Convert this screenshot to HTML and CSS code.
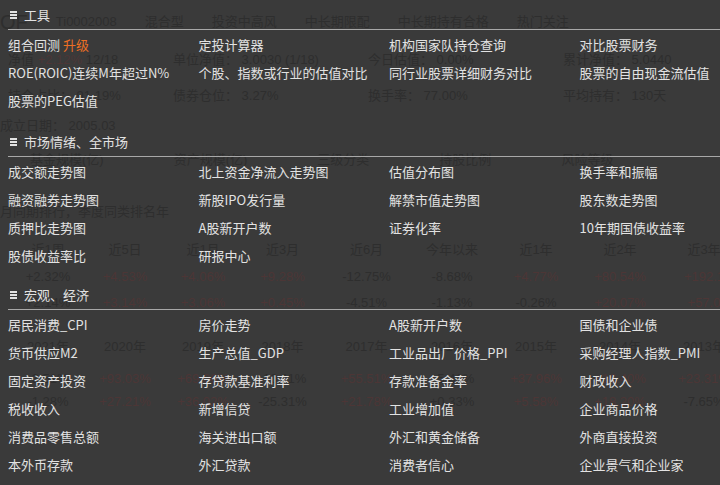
FILE: index.html
```html
<!DOCTYPE html>
<html lang="zh-CN">
<head>
<meta charset="utf-8">
<title>工具菜单</title>
<link rel="stylesheet" href="styles.css">
</head>
<body>
<div class="ghost">
  <div class="g-row g-a">
    <span class="g-big">OF</span><span>Ti0002008</span><span>混合型</span><span>投资中高风</span><span>中长期限配</span><span>中长期持有合格</span><span>热门关注</span>
  </div>
  <div class="g-row g-b g-four">
    <span>净值 <em class="red">+2.12%</em> 12/18</span><span>单位净值： 3.0030 (1/18)</span><span>今日估值： 0.00%</span><span>累计净值： 5.0440</span>
  </div>
  <div class="g-row g-c g-four">
    <span>持仓占比： 91.19%</span><span>债券仓位： 3.27%</span><span>换手率： 77.00%</span><span>平均持有： 130天</span>
  </div>
  <div class="g-row g-d"><span>成立日期： 2005.03</span></div>
  <div class="g-row g-e">
    <span>基金规模(亿)</span><span>资产规模(亿)</span><span>三级分类</span><span>持股比例</span><span>风险等级</span>
  </div>
  <div class="g-row g-f"><span>月同期排行，季度同类排名年</span></div>
  <div class="g-row g-g g-nine">
    <span>近1周</span><span>近5日</span><span>近1月</span><span>近3月</span><span>近6月</span><span>今年以来</span><span>近1年</span><span>近2年</span><span>近3年</span>
  </div>
  <div class="g-row g-h g-nine">
    <span>+2.32%</span><span class="red">+4.53%</span><span class="red">+4.06%</span><span class="red">+9.28%</span><span>-12.75%</span><span>-8.68%</span><span class="red">+4.77%</span><span class="red">+80.54%</span><span class="red">+192.1</span>
  </div>
  <div class="g-row g-i g-nine">
    <span>+2.14%</span><span class="red">+3.14%</span><span class="red">+3.06%</span><span class="red">+0.45%</span><span>-4.51%</span><span>-1.13%</span><span>-0.26%</span><span class="red">+20.07%</span><span class="red">+57.0</span>
  </div>
  <div class="g-row g-j g-nine">
    <span>2021年</span><span>2020年</span><span>2019年</span><span>2018年</span><span>2017年</span><span>2016年</span><span>2015年</span><span>2014年</span><span>2013年</span>
  </div>
  <div class="g-row g-k g-nine">
    <span>-3.51%</span><span class="red">+93.03%</span><span class="red">+69.06%</span><span>-10.11%</span><span class="red">+55.51%</span><span>+5.41%</span><span class="red">+37.96%</span><span class="red">+16.40%</span><span class="red">+23.31%</span>
  </div>
  <div class="g-row g-l g-nine">
    <span>-1.28%</span><span class="red">+27.21%</span><span class="red">+36.02%</span><span>-25.31%</span><span class="red">+21.78%</span><span>+0.33%</span><span class="red">+5.58%</span><span class="red">+18.20%</span><span>-7.65%</span>
  </div>
</div>

<nav class="menu">
  <section class="sec">
    <h3 class="sec-head"><svg class="bars" width="7" height="8" viewBox="0 0 7 8"><rect x="0" y="0" width="7" height="2"/><rect x="0" y="3" width="7" height="2"/><rect x="0" y="6" width="7" height="2"/></svg>工具</h3>
    <ul class="items">
      <li>组合回测 <span class="hot">升级</span></li>
      <li>定投计算器</li>
      <li>机构国家队持仓查询</li>
      <li>对比股票财务</li>
      <li>ROE(ROIC)连续M年超过N%</li>
      <li>个股、指数或行业的估值对比</li>
      <li>同行业股票详细财务对比</li>
      <li>股票的自由现金流估值</li>
      <li>股票的PEG估值</li>
    </ul>
  </section>
  <section class="sec">
    <h3 class="sec-head"><svg class="bars" width="7" height="8" viewBox="0 0 7 8"><rect x="0" y="0" width="7" height="2"/><rect x="0" y="3" width="7" height="2"/><rect x="0" y="6" width="7" height="2"/></svg>市场情绪、全市场</h3>
    <ul class="items">
      <li>成交额走势图</li>
      <li>北上资金净流入走势图</li>
      <li>估值分布图</li>
      <li>换手率和振幅</li>
      <li>融资融券走势图</li>
      <li>新股IPO发行量</li>
      <li>解禁市值走势图</li>
      <li>股东数走势图</li>
      <li>质押比走势图</li>
      <li>A股新开户数</li>
      <li>证券化率</li>
      <li>10年期国债收益率</li>
      <li>股债收益率比</li>
      <li>研报中心</li>
    </ul>
  </section>
  <section class="sec sec-last">
    <h3 class="sec-head"><svg class="bars" width="7" height="8" viewBox="0 0 7 8"><rect x="0" y="0" width="7" height="2"/><rect x="0" y="3" width="7" height="2"/><rect x="0" y="6" width="7" height="2"/></svg>宏观、经济</h3>
    <ul class="items">
      <li>居民消费_CPI</li>
      <li>房价走势</li>
      <li>A股新开户数</li>
      <li>国债和企业债</li>
      <li>货币供应M2</li>
      <li>生产总值_GDP</li>
      <li>工业品出厂价格_PPI</li>
      <li>采购经理人指数_PMI</li>
      <li>固定资产投资</li>
      <li>存贷款基准利率</li>
      <li>存款准备金率</li>
      <li>财政收入</li>
      <li>税收收入</li>
      <li>新增信贷</li>
      <li>工业增加值</li>
      <li>企业商品价格</li>
      <li>消费品零售总额</li>
      <li>海关进出口额</li>
      <li>外汇和黄金储备</li>
      <li>外商直接投资</li>
      <li>本外币存款</li>
      <li>外汇贷款</li>
      <li>消费者信心</li>
      <li>企业景气和企业家</li>
    </ul>
  </section>
</nav>
</body>
</html>
```

FILE: styles.css
```css
html, body {
  margin: 0;
  padding: 0;
}
body {
  width: 720px;
  height: 485px;
  overflow: hidden;
  position: relative;
  background: #3a3a3a;
  font-family: "Noto Sans CJK SC", "Liberation Sans", sans-serif;
  font-size: 13px;
}

/* faded page underneath */
.ghost {
  color: #2e2e2e;
  font-family: "Liberation Sans", "Noto Sans CJK SC", sans-serif;
  font-size: 13px;
}
.ghost em { font-style: normal; }
.ghost .red { color: #4c3636; }
.g-row {
  height: 20px;
  line-height: 20px;
  white-space: nowrap;
}
.g-a { margin-top: 12px; display: flex; gap: 28px; align-items: center; padding-left: 0; }
.g-big { font-size: 20px; }
.g-four { display: grid; grid-template-columns: 165px 195px 195px auto; padding-left: 8px; }
.g-b { margin-top: 18px; }
.g-c { margin-top: 16px; }
.g-d { margin-top: 10px; }
.g-e { margin-top: 14px; display: flex; gap: 70px; padding-left: 30px; }
.g-f { margin-top: 32px; }
.g-nine {
  display: grid;
  grid-template-columns: 76px 78px 78px 81px 87px 84px 84px 84px 84px;
  padding-left: 10px;
  text-align: center;
}
.g-g { margin-top: 18px; }
.g-h { margin-top: 7px; }
.g-i { margin-top: 6px; }
.g-j { margin-top: 24px; }
.g-k { margin-top: 12px; }
.g-l { margin-top: 3px; }

/* overlay menu */
.menu {
  position: absolute;
  top: 0;
  left: 0;
  right: 0;
  padding-left: 8px;
  color: #e2e2e2;
}
.sec + .sec { margin-top: 12px; }
.sec + .sec-last { margin-top: 10px; }
.sec-head {
  margin: 0;
  height: 29px;
  line-height: 28px;
  font-size: 13px;
  font-weight: normal;
  display: flex;
  align-items: center;
  border-bottom: 1px solid #a8a8a8;
  padding-left: 2px;
}
.bars {
  fill: #e2e2e2;
  margin-right: 7px;
  flex: none;
}
.items {
  list-style: none;
  margin: 0;
  padding: 1px 0 0 0;
  display: grid;
  grid-template-columns: repeat(4, 190.5px);
}
.items li {
  height: 28px;
  line-height: 28px;
  white-space: nowrap;
}
.hot { color: #ec6f24; }
```
